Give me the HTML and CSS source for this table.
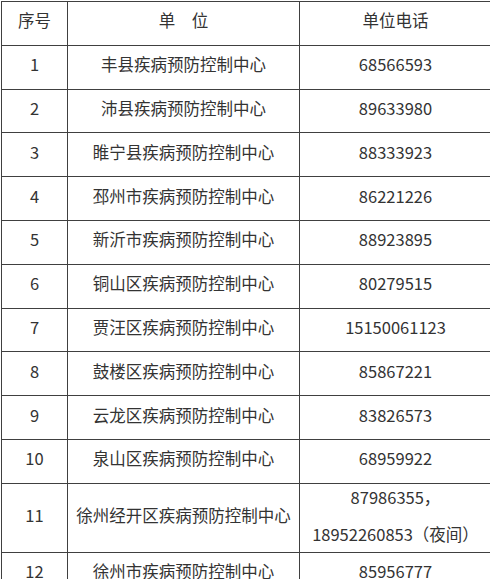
FILE: index.html
```html
<!DOCTYPE html>
<html lang="zh-CN">
<head>
<meta charset="utf-8">
<title>疾病预防控制中心电话</title>
<link rel="stylesheet" href="styles.css">
</head>
<body>
<table class="cdc">
  <colgroup>
    <col class="c-no">
    <col class="c-name">
    <col class="c-tel">
  </colgroup>
  <thead>
    <tr><th>序号</th><th>单&emsp;位</th><th>单位电话</th></tr>
  </thead>
  <tbody>
    <tr><td>1</td><td>丰县疾病预防控制中心</td><td>68566593</td></tr>
    <tr><td>2</td><td>沛县疾病预防控制中心</td><td>89633980</td></tr>
    <tr><td>3</td><td>睢宁县疾病预防控制中心</td><td>88333923</td></tr>
    <tr><td>4</td><td>邳州市疾病预防控制中心</td><td>86221226</td></tr>
    <tr><td>5</td><td>新沂市疾病预防控制中心</td><td>88923895</td></tr>
    <tr><td>6</td><td>铜山区疾病预防控制中心</td><td>80279515</td></tr>
    <tr><td>7</td><td>贾汪区疾病预防控制中心</td><td>15150061123</td></tr>
    <tr><td>8</td><td>鼓楼区疾病预防控制中心</td><td>85867221</td></tr>
    <tr><td>9</td><td>云龙区疾病预防控制中心</td><td>83826573</td></tr>
    <tr><td>10</td><td>泉山区疾病预防控制中心</td><td>68959922</td></tr>
    <tr class="tall"><td>11</td><td>徐州经开区疾病预防控制中心</td><td class="multi"><div class="lines"><div>87986355，</div><div>18952260853（夜间）</div></div></td></tr>
    <tr><td>12</td><td>徐州市疾病预防控制中心</td><td>85956777</td></tr>
  </tbody>
</table>
</body>
</html>
```
FILE: styles.css
```css
html, body {
  margin: 0;
  padding: 0;
  background: #ffffff;
}
body {
  font-family: "Noto Sans CJK SC", "Noto Sans", sans-serif;
  color: #333333;
  font-size: 16.5px;
  overflow: hidden;
}
.cdc {
  border-collapse: collapse;
  table-layout: fixed;
  width: 491px;
  margin: 1px 0 0 1px;
}
.c-no { width: 66px; }
.c-name { width: 232px; }
.c-tel { width: 192px; }
.cdc th,
.cdc td {
  border: 1px solid #404040;
  text-align: center;
  vertical-align: middle;
  font-weight: normal;
  line-height: 24px;
  padding: 0 0 6px 0;
  white-space: nowrap;
}
.cdc tr {
  height: 43.8px;
}
.cdc tr.tall {
  height: 68px;
}
.cdc td.multi {
  padding: 0;
}
.lines {
  line-height: 37px;
  margin: -5px 0 -1px 0;
}
```
